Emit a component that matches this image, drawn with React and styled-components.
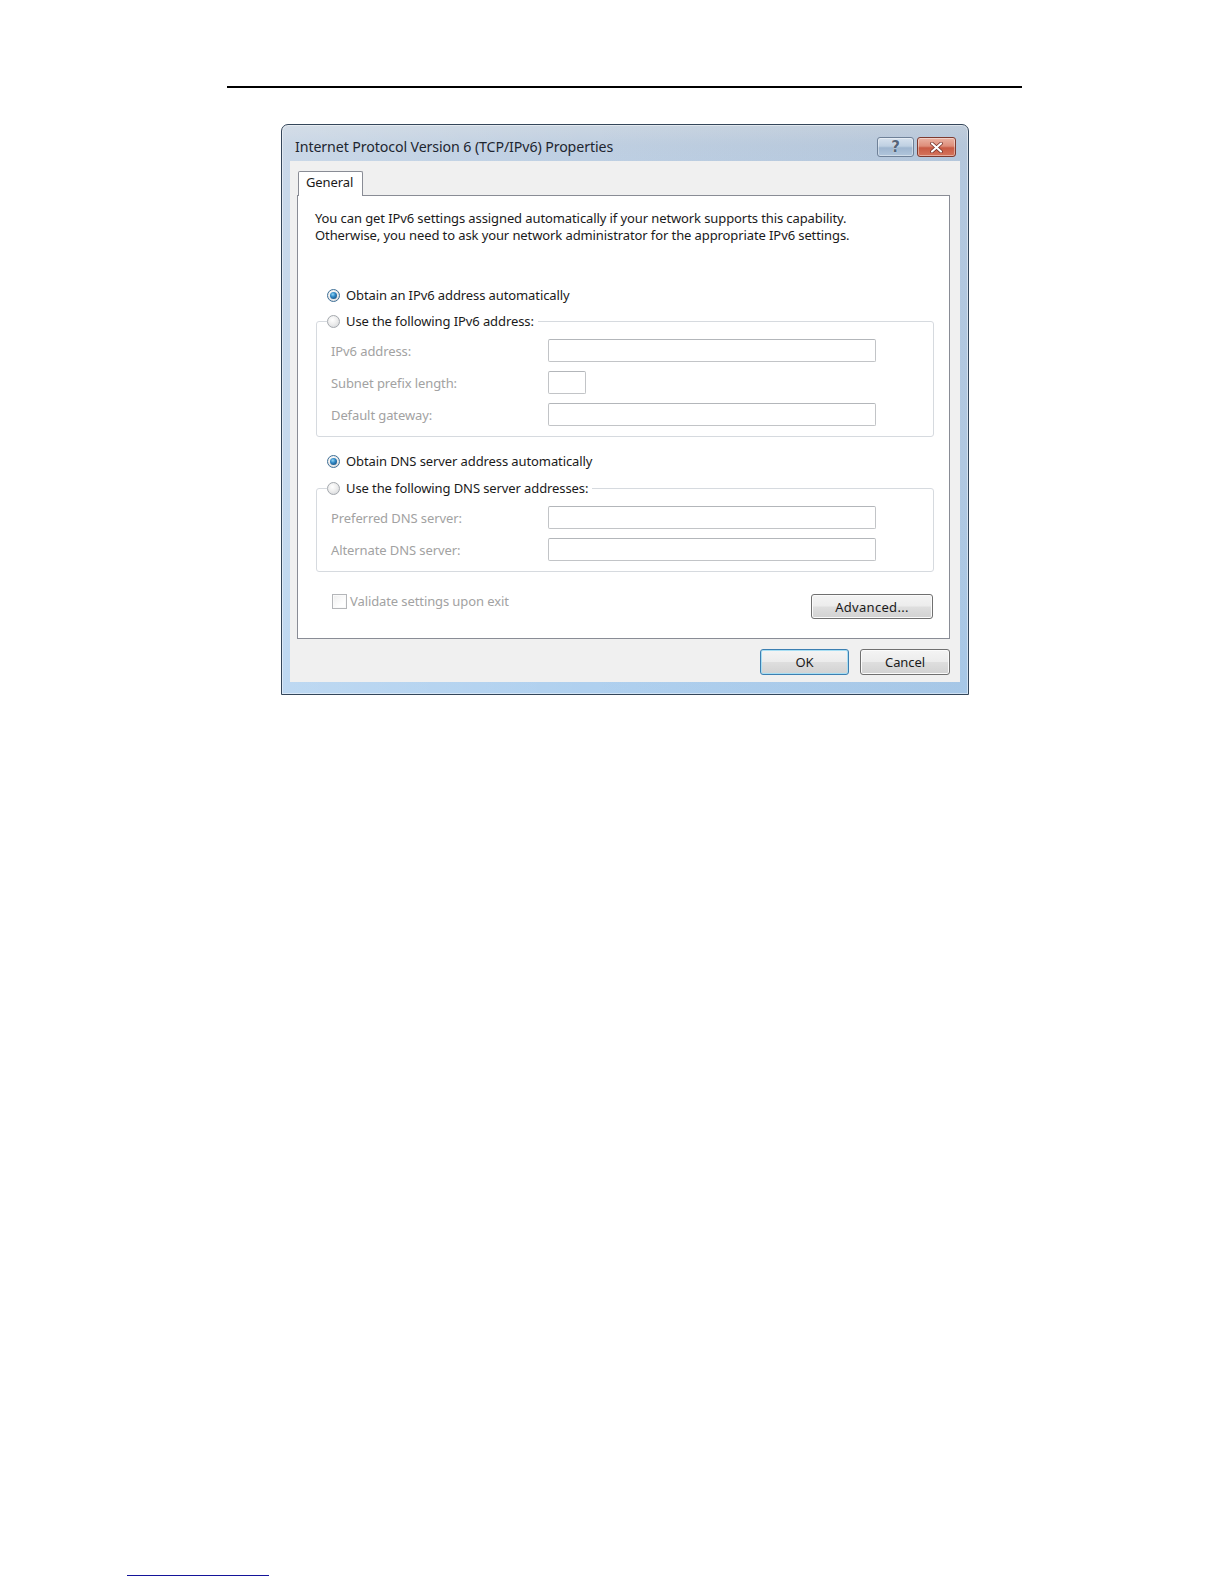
import React from "react";
import styled, { createGlobalStyle } from "styled-components";

const Global = createGlobalStyle`
  html, body { margin: 0; padding: 0; background: #ffffff; }
  body { font-family: "Noto Sans", "Open Sans", sans-serif; }
  * { box-sizing: border-box; }
`;

const UI_FONT = `"Noto Sans", "Open Sans", sans-serif`;

const Page = styled.div`
  width: 1224px;
  min-height: 1584px;
  padding-top: 86px;
  display: flex;
  flex-direction: column;
  align-items: flex-start;
`;

const TopRule = styled.div`
  margin-left: 227px;
  width: 795px;
  height: 2px;
  background: #000;
`;

const Dialog = styled.div`
  margin: 36px 0 0 281px;
  width: 688px;
  display: flex;
  flex-direction: column;
  border: 1px solid #34465a;
  border-radius: 7px 7px 0 0;
  background:
    linear-gradient(to right, rgba(255,255,255,0.18), rgba(255,255,255,0) 45%, rgba(60,90,130,0.08)),
    linear-gradient(to bottom, #cbd6e2 0px, #bfcfe1 20px, #bcd0e6 60px, #bad1e9 60%, #afd0ef 100%);
  box-shadow: inset 0 0 0 1px rgba(255,255,255,0.45);
  font-family: ${UI_FONT};
  font-size: 13px;
  letter-spacing: -0.1px;
  color: #1a1a1a;
`;

const TitleBar = styled.div`
  height: 36px;
  padding: 7px 12px 0 13px;
  display: flex;
  align-items: center;
  justify-content: space-between;
`;

const Title = styled.div`
  font-size: 14.2px;
  color: #1e2630;
`;

const CaptionButtons = styled.div`
  display: flex;
  gap: 3px;
  align-self: flex-start;
  margin-top: 5px;
`;

const CaptionButton = styled.div`
  height: 20px;
  width: ${p => p.$w}px;
  border-radius: 3px;
  display: flex;
  align-items: center;
  justify-content: center;
  border: 1px solid ${p => (p.$close ? "#7e3a2f" : "#6f8198")};
  background: ${p =>
    p.$close
      ? "linear-gradient(to bottom, #eab3a3 0%, #de8e7a 45%, #c85b44 55%, #d5745c 100%)"
      : "linear-gradient(to bottom, #d7e2ee 0%, #bfd0e2 45%, #9fb6d0 55%, #b1c6dc 100%)"};
  box-shadow: inset 0 0 0 1px rgba(255,255,255,0.4);
  color: #56657a;
  font-family: "DejaVu Sans", sans-serif;
  font-weight: bold;
  font-size: 15px;
  line-height: 1;
  text-shadow: 0 0 1px #ffffff;
`;

const Client = styled.div`
  margin: 0 8px 12px 8px;
  background: #f0f0f0;
  padding-top: 10px;
  display: flex;
  flex-direction: column;
`;

const TabStrip = styled.div`
  display: flex;
  padding-left: 8px;
`;

const Tab = styled.div`
  position: relative;
  z-index: 1;
  width: 65px;
  height: 25px;
  margin-bottom: -1px;
  padding: 1px 0 0 7px;
  background: #ffffff;
  border: 1px solid #898c95;
  border-bottom: none;
  border-radius: 2px 2px 0 0;
  line-height: 19px;
`;

const Panel = styled.div`
  margin: 0 10px 0 7px;
  background: #ffffff;
  border: 1px solid #898c95;
  padding: 14px 0 19px 0;
  display: flex;
  flex-direction: column;
`;

const Intro = styled.p`
  margin: 0;
  padding-left: 17px;
  line-height: 17px;
`;

const RadioRow = styled.label`
  display: flex;
  align-items: center;
  gap: 6px;
  height: 20px;
  margin-top: ${p => p.$mt}px;
  padding-left: 29px;
`;

const RadioDot = styled.span`
  position: relative;
  flex: none;
  width: 13px;
  height: 13px;
  border-radius: 50%;
  border: 1px solid ${p => (p.$checked ? "#3e6f96" : "#a4a8ad")};
  background: radial-gradient(circle at 40% 35%, #ffffff 0%, #eeeeee 45%, #cfd2d6 100%);
  &::after {
    content: "";
    display: ${p => (p.$checked ? "block" : "none")};
    position: absolute;
    inset: 2px;
    border-radius: 50%;
    background: radial-gradient(circle at 40% 35%, #8fd6f6 0%, #2f86c4 40%, #0f3f6c 100%);
  }
`;

const Group = styled.fieldset`
  margin: ${p => p.$mt}px 15px 0 18px;
  padding: 8px 14px ${p => p.$pb}px 14px;
  border: 1px solid #d6dadf;
  border-radius: 3px;
  display: flex;
  flex-direction: column;
  gap: 9px;
  min-width: 0;
`;

const Legend = styled.legend`
  margin-left: -4px;
  padding: 0 4px 0 0;
  height: 20px;
  display: flex;
  align-items: center;
  gap: 6px;
  color: #1a1a1a;
`;

const FieldRow = styled.div`
  display: grid;
  grid-template-columns: 217px auto;
  align-items: center;
  height: 23px;
`;

const FieldLabel = styled.span`
  color: #a2a2a2;
`;

const TextBox = styled.div`
  width: ${p => p.$w}px;
  height: 23px;
  background: #ffffff;
  border: 1px solid #c2c4c7;
  border-top-color: #b3b6ba;
  border-radius: 2px;
`;

const Footer = styled.div`
  margin-top: 20px;
  display: flex;
  align-items: flex-start;
  justify-content: space-between;
  padding: 0 16px 0 34px;
`;

const CheckRow = styled.label`
  display: flex;
  align-items: center;
  gap: 3px;
  height: 18px;
  color: #a2a2a2;
`;

const CheckBox = styled.span`
  width: 15px;
  height: 15px;
  border: 1px solid #b4b6b9;
  background: linear-gradient(135deg, #eeeeee, #ffffff 70%);
  box-shadow: inset 0 0 0 1px #fafafa;
`;

const Button = styled.div`
  margin-top: ${p => p.$mt || 0}px;
  width: ${p => p.$w}px;
  height: ${p => p.$h}px;
  display: flex;
  align-items: center;
  justify-content: center;
  border-radius: 3px;
  border: 1px solid ${p => (p.$default ? "#3c7fb1" : "#707070")};
  background: linear-gradient(to bottom, #f4f4f4 0%, #ececec 48%, #dedede 52%, #d2d2d2 100%);
  box-shadow: inset 0 0 0 1px ${p => (p.$default ? "#a7def3" : "#fbfbfb")};
  color: #1a1a1a;
  letter-spacing: ${p => p.$ls || "-0.1px"};
`;

const ButtonRow = styled.div`
  margin-top: 10px;
  padding: 0 10px 7px 0;
  display: flex;
  justify-content: flex-end;
  gap: 11px;
`;

const FootLink = styled.div`
  margin: 880px 0 0 127px;
  width: 142px;
  height: 1px;
  background: #14149a;
`;

const CloseGlyph = () => (
  <svg width="13" height="11" viewBox="0 0 13 11">
    <path
      d="M2 1.5 L11 9.5 M11 1.5 L2 9.5"
      stroke="#6d2a20"
      strokeWidth="3.6"
      strokeLinecap="round"
      fill="none"
    />
    <path
      d="M2 1.5 L11 9.5 M11 1.5 L2 9.5"
      stroke="#ffffff"
      strokeWidth="2.2"
      strokeLinecap="round"
      fill="none"
    />
  </svg>
);

const Field = ({ label, w }) => (
  <FieldRow>
    <FieldLabel>{label}</FieldLabel>
    <TextBox $w={w} />
  </FieldRow>
);

export default function App() {
  return (
    <>
      <Global />
      <Page>
        <TopRule />
        <Dialog>
          <TitleBar>
            <Title>Internet Protocol Version 6 (TCP/IPv6) Properties</Title>
            <CaptionButtons>
              <CaptionButton $w={37}>?</CaptionButton>
              <CaptionButton $w={39} $close>
                <CloseGlyph />
              </CaptionButton>
            </CaptionButtons>
          </TitleBar>
          <Client>
            <TabStrip>
              <Tab>General</Tab>
            </TabStrip>
            <Panel>
              <Intro>
                You can get IPv6 settings assigned automatically if your network supports this capability.
                <br />
                Otherwise, you need to ask your network administrator for the appropriate IPv6 settings.
              </Intro>
              <RadioRow $mt={41}>
                <RadioDot $checked />
                Obtain an IPv6 address automatically
              </RadioRow>
              <Group $mt={6} $pb={10}>
                <Legend>
                  <RadioDot />
                  Use the following IPv6 address:
                </Legend>
                <Field label="IPv6 address:" w={328} />
                <Field label="Subnet prefix length:" w={38} />
                <Field label="Default gateway:" w={328} />
              </Group>
              <RadioRow $mt={14}>
                <RadioDot $checked />
                Obtain DNS server address automatically
              </RadioRow>
              <Group $mt={7} $pb={10}>
                <Legend>
                  <RadioDot />
                  Use the following DNS server addresses:
                </Legend>
                <Field label="Preferred DNS server:" w={328} />
                <Field label="Alternate DNS server:" w={328} />
              </Group>
              <Footer>
                <CheckRow>
                  <CheckBox />
                  Validate settings upon exit
                </CheckRow>
                <Button $w={122} $h={25} $mt={2} $ls="0.3px">Advanced...</Button>
              </Footer>
            </Panel>
            <ButtonRow>
              <Button $w={89} $h={26} $default>OK</Button>
              <Button $w={90} $h={26}>Cancel</Button>
            </ButtonRow>
          </Client>
        </Dialog>
        <FootLink />
      </Page>
    </>
  );
}
